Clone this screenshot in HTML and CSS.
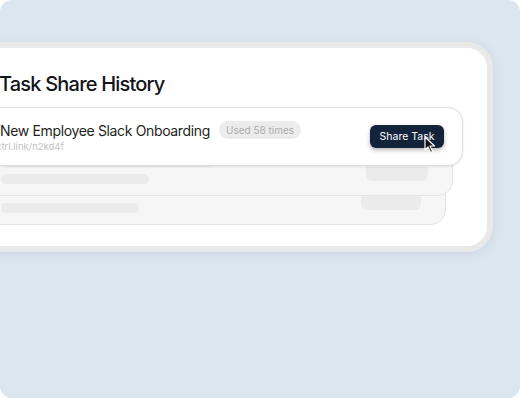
FILE: index.html
```html
<!DOCTYPE html>
<html lang="en">
<head>
    <meta charset="UTF-8">
    <meta name="viewport" content="width=device-width, initial-scale=1.0">
    <title>Task Share History</title>
    <link rel="stylesheet" href="styles.css">
</head>
<body>
    <div class="page">
        <div class="frame">
            <h1 class="title">Task Share History</h1>
            <div class="stack">
                <div class="card ghost ghost-2">
                    <div class="ghost-bar"></div>
                    <div class="ghost-btn"></div>
                </div>
                <div class="card ghost ghost-1">
                    <div class="ghost-title"></div>
                    <div class="ghost-bar"></div>
                    <div class="ghost-btn"></div>
                </div>
                <div class="card front">
                    <div class="info">
                        <div class="name-row">
                            <span class="name">New Employee Slack Onboarding</span>
                            <span class="badge">Used 58 times</span>
                        </div>
                        <div class="link">ctrl.link/n2kd4f</div>
                    </div>
                    <button class="share">Share Task</button>
                    <svg class="cursor" width="12" height="18" viewBox="0 0 12 18">
                        <path d="M1 1 L1 14 L4 11 L6.5 16.5 L8.5 15.5 L6 10 L10.5 10 Z" fill="#111" stroke="#fff" stroke-width="1.2" stroke-linejoin="round"/>
                    </svg>
                </div>
            </div>
        </div>
    </div>
</body>
</html>
```

FILE: styles.css
```css
/* page */
* {
    box-sizing: border-box;
}

body {
    margin: 0;
    background: #ffffff;
    font-family: 'Inter', 'Liberation Sans', sans-serif;
}

.page {
    width: 520px;
    height: 398px;
    background: #dce6f0;
    border-radius: 12px;
    overflow: hidden;
    padding-top: 42px;
}

.frame {
    margin-left: -30px;
    width: 523px;
    height: 210px;
    background: #ffffff;
    border: 6px solid #e9e9ea;
    border-radius: 26px;
    padding: 0 0 0 10px;
    box-shadow: 0 2px 10px rgba(120, 140, 170, 0.18);
}

.title {
    margin: 0;
    padding: 22px 0 0 13px;
    font-size: 20px;
    line-height: 28px;
    font-weight: 500;
    letter-spacing: -0.8px;
    color: #111418;
}

.stack {
    position: relative;
    margin-top: 9px;
    height: 120px;
}

.card {
    position: absolute;
    left: 0;
    height: 59px;
    border-radius: 15px;
}

.front {
    top: 0;
    width: 477px;
    background: #ffffff;
    border: 1px solid #dedede;
    box-shadow: 0 1px 3px rgba(0, 0, 0, 0.08);
    display: flex;
    align-items: center;
    padding: 0 18px 0 13px;
    z-index: 3;
}

.ghost {
    background: #f6f6f6;
    border: 1px solid #e4e4e4;
}

.ghost-1 {
    top: 30px;
    width: 467px;
    z-index: 2;
}

.ghost-2 {
    top: 59px;
    width: 460px;
    z-index: 1;
}

.ghost-title {
    position: absolute;
    left: 14px;
    top: 17px;
    width: 215px;
    height: 12px;
    border-radius: 6px;
    background: #e6e6e6;
}

.ghost-bar {
    position: absolute;
    left: 14px;
    top: 36px;
    width: 148px;
    height: 10px;
    border-radius: 5px;
    background: #ebebeb;
}

.ghost-2 .ghost-bar {
    width: 138px;
}

.ghost-btn {
    position: absolute;
    right: 24px;
    top: 19px;
    width: 62px;
    height: 24px;
    border-radius: 6px;
    background: #ebebeb;
}

.ghost-2 .ghost-btn {
    right: 24px;
    width: 60px;
}

.info {
    flex: 1;
}

.name-row {
    display: flex;
    align-items: center;
    gap: 9px;
}

.name {
    font-size: 14px;
    color: #1e1f22;
    letter-spacing: -0.35px;
}

.badge {
    background: #ececec;
    color: #ababab;
    font-size: 10px;
    padding: 3px 7px;
    border-radius: 9px;
}

.link {
    margin-top: 2px;
    margin-left: -4px;
    font-size: 9.5px;
    color: #c2c2c2;
}

.share {
    margin-top: 0;
    width: 74px;
    height: 23px;
    border: none;
    border-radius: 6px;
    background: #13233a;
    color: #ffffff;
    font-family: 'Inter', 'Liberation Sans', sans-serif;
    font-size: 10.5px;
    box-shadow: 0 2px 4px rgba(0, 0, 0, 0.3);
    padding: 0;
}

.cursor {
    position: absolute;
    left: 437px;
    top: 28px;
}
```
